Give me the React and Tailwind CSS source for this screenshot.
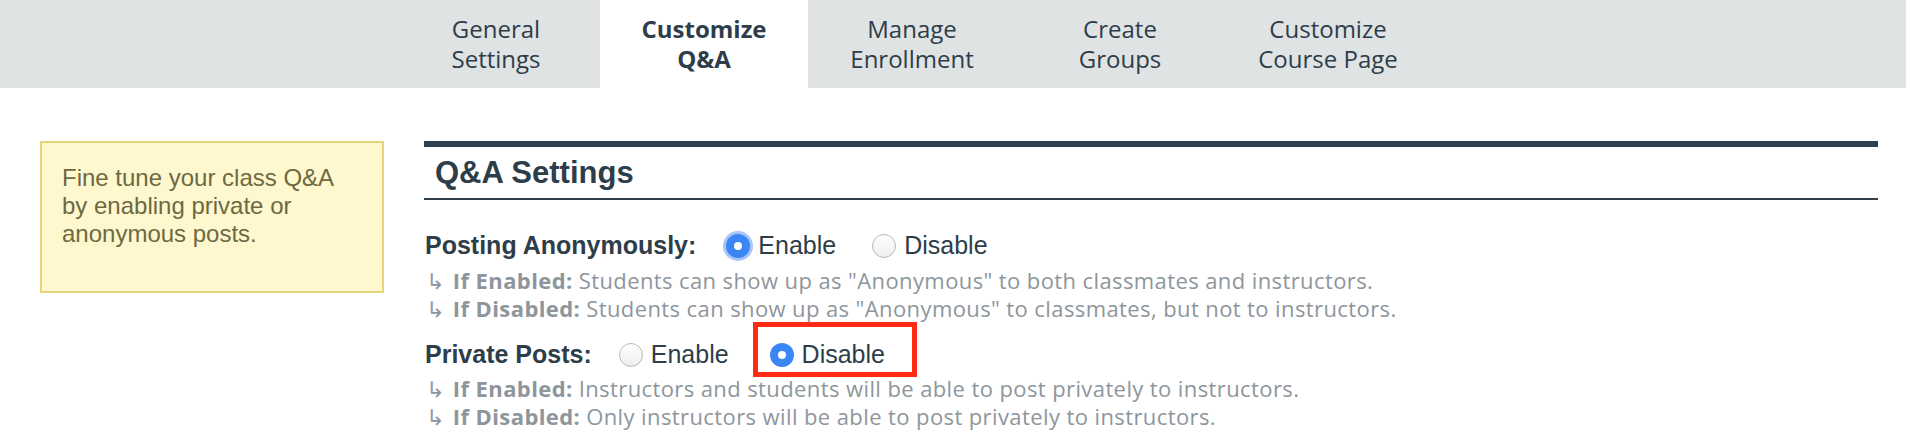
import React from "react";

const tabs = [
  ["General", "Settings"],
  ["Customize", "Q&A"],
  ["Manage", "Enrollment"],
  ["Create", "Groups"],
  ["Customize", "Course Page"],
];

function Radio({ checked, focus }) {
  if (checked) {
    return (
      <span
        className={
          "flex h-[24px] w-[24px] shrink-0 items-center justify-center rounded-full bg-[#3b86f5] " +
          (focus ? "shadow-[0_0_0_3px_rgba(96,150,240,0.55)]" : "")
        }
      >
        <span className="h-[8px] w-[8px] rounded-full bg-white" />
      </span>
    );
  }
  return (
    <span className="h-[24px] w-[24px] shrink-0 rounded-full border border-[#b9b9b9] bg-gradient-to-b from-white to-[#ededed] shadow-[inset_0_1px_1px_rgba(255,255,255,0.9)]" />
  );
}

function Option({ checked, focus, label, children }) {
  return (
    <span className="relative flex h-[30px] items-center gap-[8px]">
      <Radio checked={checked} focus={focus} />
      <span className="text-[25px] text-[#2d3d49]">{label}</span>
      {children}
    </span>
  );
}

function Desc({ strong, text }) {
  return (
    <div className="flex items-baseline whitespace-nowrap text-[22px] leading-[26px] tracking-[0.4px] text-[#8e969c] [font-family:'Open_Sans',sans-serif]">
      <span className="mr-[8px] ml-[1px] text-[22px] [font-family:'DejaVu_Sans',sans-serif]">↳</span>
      <span className="font-bold">{strong}</span>
      <span className="ml-[6px]">{text}</span>
    </div>
  );
}

export default function App() {
  return (
    <div className="min-h-[434px] w-[1906px] bg-white [font-family:'Liberation_Sans',Arial,sans-serif]">
      <div className="flex h-[88px] bg-[#dfe3e4] pl-[392px]">
        {tabs.map((t, i) => (
          <div
            key={i}
            className={
              "flex w-[208px] flex-col items-center justify-center text-center text-[24px] leading-[30px] text-[#2e3d49] [font-family:'Open_Sans',sans-serif] " +
              (i === 1 ? "bg-white font-bold" : "")
            }
          >
            <span>{t[0]}</span>
            <span>{t[1]}</span>
          </div>
        ))}
      </div>

      <div className="flex pl-[40px] pr-[28px] pt-[53px]">
        <div className="h-[152px] w-[344px] shrink-0 border-2 border-[#e8d47c] bg-[#fff8cf] px-[20px] pt-[21px] text-[24px] leading-[28px] text-[#6d6942]">
          Fine tune your class Q&amp;A by enabling private or anonymous posts.
        </div>

        <div className="ml-[40px] flex-1">
          <div className="border-t-[6px] border-b-2 border-[#2f404c]">
            <h2 className="h-[51px] pl-[11px] text-[31px] font-bold leading-[51px] text-[#2d3d49]">
              Q&amp;A Settings
            </h2>
          </div>

          <div className="pt-[31px] pl-[1px]">
            <div className="flex h-[30px] items-center">
              <span className="text-[25px] font-bold text-[#2d3d49]">Posting Anonymously:</span>
              <span className="ml-[30px] flex items-center gap-[36px]">
                <Option checked focus label="Enable" />
                <Option label="Disable" />
              </span>
            </div>
            <div className="mt-[6px]">
              <Desc strong="If Enabled:" text={'Students can show up as "Anonymous" to both classmates and instructors.'} />
              <Desc strong="If Disabled:" text={'Students can show up as "Anonymous" to classmates, but not to instructors.'} />
            </div>

            <div className="mt-[17px] flex h-[30px] items-center">
              <span className="text-[25px] font-bold text-[#2d3d49]">Private Posts:</span>
              <span className="ml-[27px] flex items-center gap-[41px]">
                <Option label="Enable" />
                <Option checked label="Disable">
                  <span className="pointer-events-none absolute left-[-17px] top-[-18px] h-[55px] w-[164px] border-[5px] border-[#ff2a12]" />
                </Option>
              </span>
            </div>
            <div className="mt-[5px]">
              <Desc strong="If Enabled:" text="Instructors and students will be able to post privately to instructors." />
              <Desc strong="If Disabled:" text="Only instructors will be able to post privately to instructors." />
            </div>
          </div>
        </div>
      </div>
    </div>
  );
}
